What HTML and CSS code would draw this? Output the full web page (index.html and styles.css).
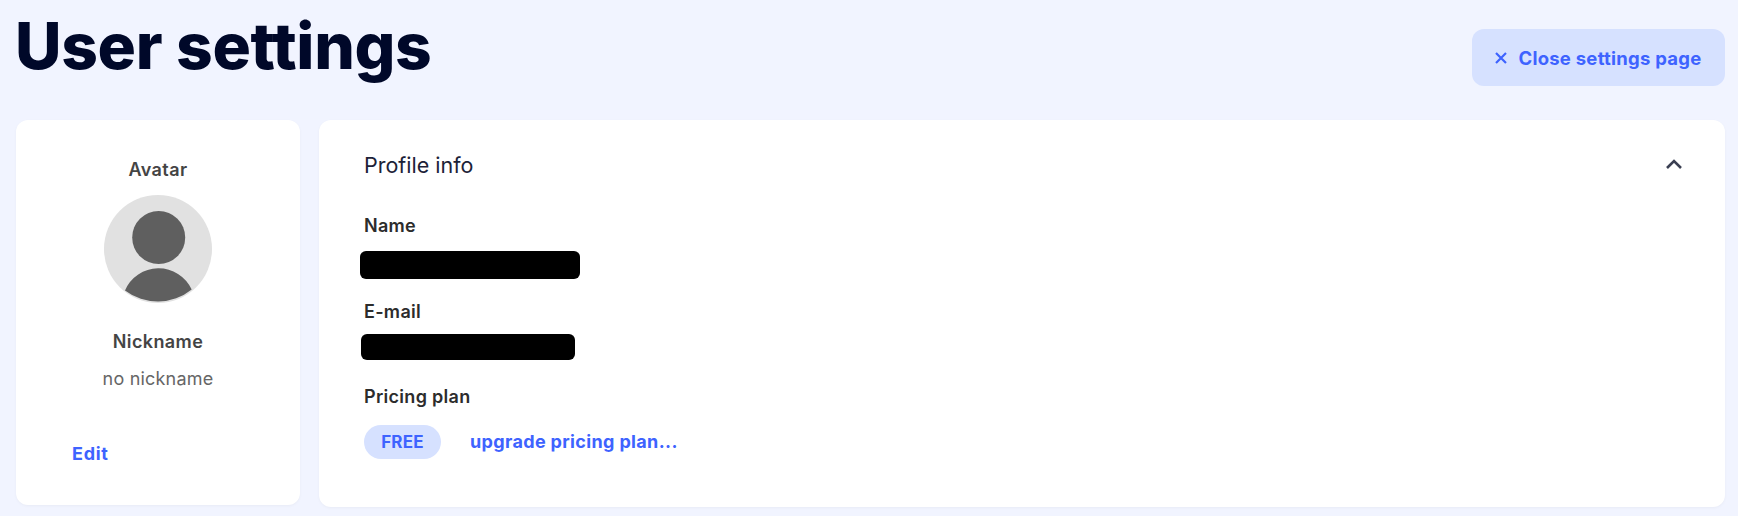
FILE: index.html
```html
<!DOCTYPE html>
<html lang="en">
<head>
  <meta charset="UTF-8" />
  <title>User settings</title>
  <link rel="stylesheet" href="styles.css">
</head>
<body>
<div class="page">
  <header class="top">
    <h1>User settings</h1>
    <button class="close-btn" type="button">
      <svg class="close-icon" viewBox="0 0 12 12" width="12" height="12"><path d="M1 1l10 10M11 1L1 11" /></svg>
      Close settings page
    </button>
  </header>
  <main class="cards">
    <section class="card side">
      <div class="side-label">Avatar</div>
      <svg class="avatar" viewBox="0 0 108 108" width="108" height="108">
        <circle cx="54" cy="54" r="54" fill="#e1e1e1" />
        <circle cx="54.7" cy="42.5" r="26.5" fill="#5f5f5f" />
        <path d="M21 95.5 A36.5 36.5 0 0 1 87.7 94.5 A54 54 0 0 1 21 95.5 Z" fill="#5f5f5f" />
      </svg>
      <div class="side-label nick">Nickname</div>
      <div class="nick-value">no nickname</div>
      <a class="edit" href="#">Edit</a>
    </section>
    <section class="card info">
      <div class="info-head">
        <h2>Profile info</h2>
        <svg class="chevron" viewBox="0 0 18 12" width="18" height="12"><path d="M2 10l7-7 7 7" /></svg>
      </div>
      <div class="field-label">Name</div>
      <div class="redacted name-bar"></div>
      <div class="field-label">E-mail</div>
      <div class="redacted mail-bar"></div>
      <div class="field-label">Pricing plan</div>
      <div class="plan-row">
        <span class="badge">FREE</span>
        <a class="upgrade" href="#">upgrade pricing plan...</a>
      </div>
    </section>
  </main>
</div>
</body>
</html>
```

FILE: styles.css
```css
html, body {
  margin: 0;
  background: #fff;
}
body {
  font-family: Inter, "Liberation Sans", sans-serif;
  color: #333;
}
.page {
  height: 516px;
  box-sizing: border-box;
  padding: 0 13px 0 16px;
  background: #f1f4ff;
  overflow: hidden;
}
.top {
  height: 120px;
  display: flex;
  justify-content: space-between;
  align-items: flex-start;
}
h1 {
  margin: 10px 0 0 -1px;
  font-size: 64px;
  line-height: 72px;
  font-weight: 800;
  letter-spacing: -0.3px;
  color: #000829;
}
.close-btn {
  margin-top: 29px;
  width: 253px;
  height: 57px;
  display: flex;
  align-items: center;
  justify-content: center;
  gap: 11px;
  border: none;
  border-radius: 12px;
  background: #d6e1ff;
  color: #3e63ff;
  font-family: inherit;
  font-size: 18.5px;
  font-weight: 700;
  letter-spacing: 0.25px;
}
.close-icon {
  fill: none;
  stroke: #3e63ff;
  stroke-width: 2.2;
}
.cards {
  display: flex;
  align-items: flex-start;
  gap: 19px;
}
.card {
  background: #fff;
  border-radius: 12px;
  box-shadow: 0 1px 3px rgb(0 0 0 / 0.04);
}
.side {
  width: 284px;
  height: 385px;
  flex: none;
  box-sizing: border-box;
  padding-top: 39px;
  display: flex;
  flex-direction: column;
  align-items: center;
}
.side-label {
  font-size: 18px;
  line-height: 22px;
  font-weight: 600;
  letter-spacing: 0.4px;
  color: #444;
}
.avatar {
  margin-top: 14px;
}
.nick {
  margin-top: 28px;
}
.nick-value {
  margin-top: 15px;
  font-size: 18px;
  line-height: 22px;
  letter-spacing: 0.2px;
  color: #666;
}
.edit {
  align-self: flex-start;
  margin: 53px 0 0 56px;
  font-size: 18px;
  line-height: 22px;
  font-weight: 700;
  letter-spacing: 0.7px;
  color: #3e63ff;
  text-decoration: none;
}
.info {
  flex: 1;
  height: 387px;
  box-sizing: border-box;
  padding: 33px 42px 0 45px;
}
.info-head {
  display: flex;
  justify-content: space-between;
  align-items: center;
  height: 24px;
}
h2 {
  margin: 0;
  font-size: 21.5px;
  line-height: 24px;
  font-weight: 400;
  color: #1c2238;
}
.chevron {
  fill: none;
  stroke: #3a3f52;
  stroke-width: 2.6;
  margin-top: -2px;
}
.field-label {
  font-size: 18px;
  line-height: 22px;
  font-weight: 600;
  letter-spacing: 0.3px;
  color: #2c2c2c;
}
.info-head + .field-label {
  margin-top: 38px;
}
.redacted {
  background: #000;
  border-radius: 6px;
}
.name-bar {
  width: 220px;
  height: 28px;
  margin: 14px 0 22px -4px;
}
.mail-bar {
  width: 214px;
  height: 26px;
  margin: 11px 0 26px -3px;
}
.plan-row {
  display: flex;
  align-items: center;
  margin-top: 17px;
  height: 34px;
}
.badge {
  width: 77px;
  height: 34px;
  display: flex;
  align-items: center;
  justify-content: center;
  border-radius: 17px;
  background: #d6e1ff;
  color: #3e63ff;
  font-size: 17px;
  font-weight: 700;
  letter-spacing: 0.2px;
}
.upgrade {
  margin: 0 0 2px 29px;
  font-size: 18px;
  font-weight: 700;
  letter-spacing: 0.35px;
  color: #3e63ff;
  text-decoration: none;
}
```
